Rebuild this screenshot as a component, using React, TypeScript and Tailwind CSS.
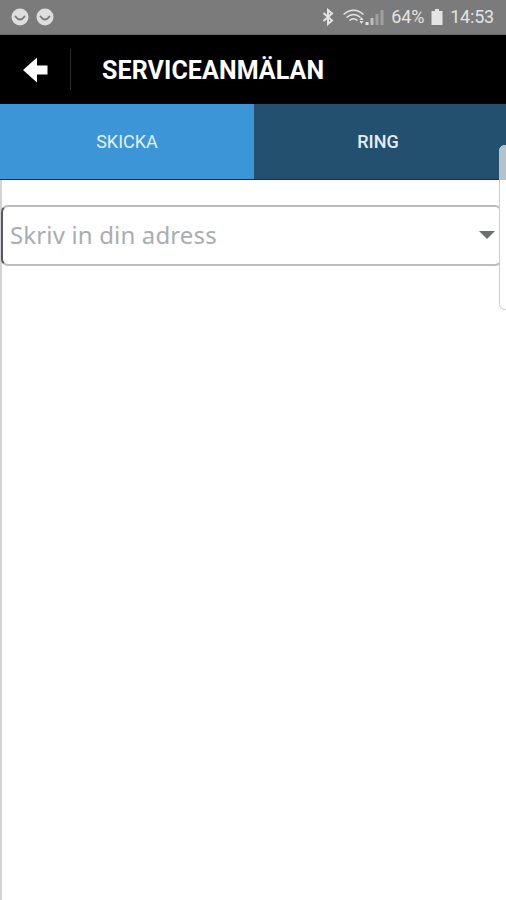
export default function App() {
  return (
    <div className="relative w-[506px] h-[900px] overflow-hidden bg-white flex flex-col font-['Roboto',sans-serif]">
      {/* status bar */}
      <div className="h-[35px] bg-[#7b7b7b] border-b border-[#6a6a6a] flex items-center pl-[11px] pr-[12px] text-[#e4e4e4]">
        <div className="flex gap-[7px]">
          {[0, 1].map((i) => (
            <svg key={i} width="18" height="18" viewBox="0 0 18 18">
              <circle cx="9" cy="9" r="8.5" fill="#dedede" />
              <path d="M4.5 8.5 Q9 14.5 13.5 8.5" fill="none" stroke="#7b7b7b" strokeWidth="2" strokeLinecap="round" />
            </svg>
          ))}
        </div>
        <div className="ml-auto flex items-center">
          <svg width="12" height="18" viewBox="0 0 12 18" className="mr-[8px]">
            <path d="M1.5 5 L10 12.5 L6 16 V2 L10 5.5 L1.5 13" fill="none" stroke="#e4e4e4" strokeWidth="2" />
          </svg>
          <svg width="43" height="18" viewBox="0 0 42 18">
            <path d="M1 6.5 Q11 -2 21 6.5" fill="none" stroke="#e4e4e4" strokeWidth="1.6" />
            <path d="M4 9.5 Q11 3.5 18 9.5" fill="none" stroke="#e4e4e4" strokeWidth="1.6" />
            <path d="M7 12.5 Q11 9 15 12.5" fill="none" stroke="#e4e4e4" strokeWidth="1.6" />
            <path d="M17 13 l4 0 l-2 3 z M19 9 l2 3 l-4 0 z" fill="#e4e4e4" />
            <path d="M23 17 h3 v-3 h-3 z" fill="#e4e4e4" />
            <path d="M28 17 h3 v-7 h-3 z" fill="#bdbdbd" />
            <path d="M33 17 h3 V6 h-3 z" fill="#a0a0a0" />
            <path d="M38 17 h3 V2 h-3 z" fill="#a0a0a0" />
          </svg>
          <span className="text-[18px] leading-none ml-[6px] tracking-[-0.2px]">64%</span>
          <svg width="12" height="18" viewBox="0 0 12 18" className="ml-[7px]">
            <path d="M4 1 h4 v2 h3.5 v14 h-11 v-14 h3.5 z" fill="#e4e4e4" />
          </svg>
          <span className="text-[18px] leading-none ml-[7px] tracking-[-0.2px]">14:53</span>
        </div>
      </div>
      {/* header */}
      <div className="h-[69px] bg-black flex items-center">
        <div className="w-[71px] h-[41px] border-r border-[#2b2b2b] flex items-center pl-[23px]">
          <svg width="25" height="26" viewBox="0 0 25 26">
            <path d="M0 13 L14 0.5 V8.5 H24.5 V17.5 H14 V25.5 Z" fill="#fff" />
          </svg>
        </div>
        <span className="ml-[31px] mt-[2px] text-[25px] font-bold text-white tracking-[0.1px]">SERVICEANMÄLAN</span>
      </div>
      {/* tabs */}
      <div className="h-[76px] flex border-b border-[#0f2a5e]">
        <div className="w-[254px] bg-[#3c95d6] flex items-center justify-center text-[#e3f1fb] text-[18px]">SKICKA</div>
        <div className="flex-1 bg-[#23506f] flex items-center justify-center pr-[4px] text-[#e6edf2] text-[18px] font-medium">RING</div>
      </div>
      {/* content */}
      <div className="flex-1 border-l-2 border-[#d4d4d4] pt-[25px]">
        <div className="-ml-px w-[501px] h-[61px] bg-white rounded-[7px] border-2 border-[#bdbdbd] border-l-[#55585e] flex items-center justify-between pl-[7px] pr-[5px]">
          <span className="text-[24px] leading-none mb-[2px] tracking-[0.15px] text-[#a9adb1] font-['Noto_Sans',sans-serif]">Skriv in din adress</span>
          <span className="w-0 h-0 border-x-[8px] border-x-transparent border-t-[8px] border-t-[#6b7075] mb-[2px]" />
        </div>
      </div>
      {/* side drawer handle */}
      <div className="absolute left-[499px] top-[145px] w-[12px] h-[165px] rounded-l-[6px] border border-[#c9ced3] bg-white" />
      <div className="absolute left-[499px] top-[145px] w-[12px] h-[35px] rounded-tl-[6px] bg-[#b4c2cd]" />
    </div>
  );
}
